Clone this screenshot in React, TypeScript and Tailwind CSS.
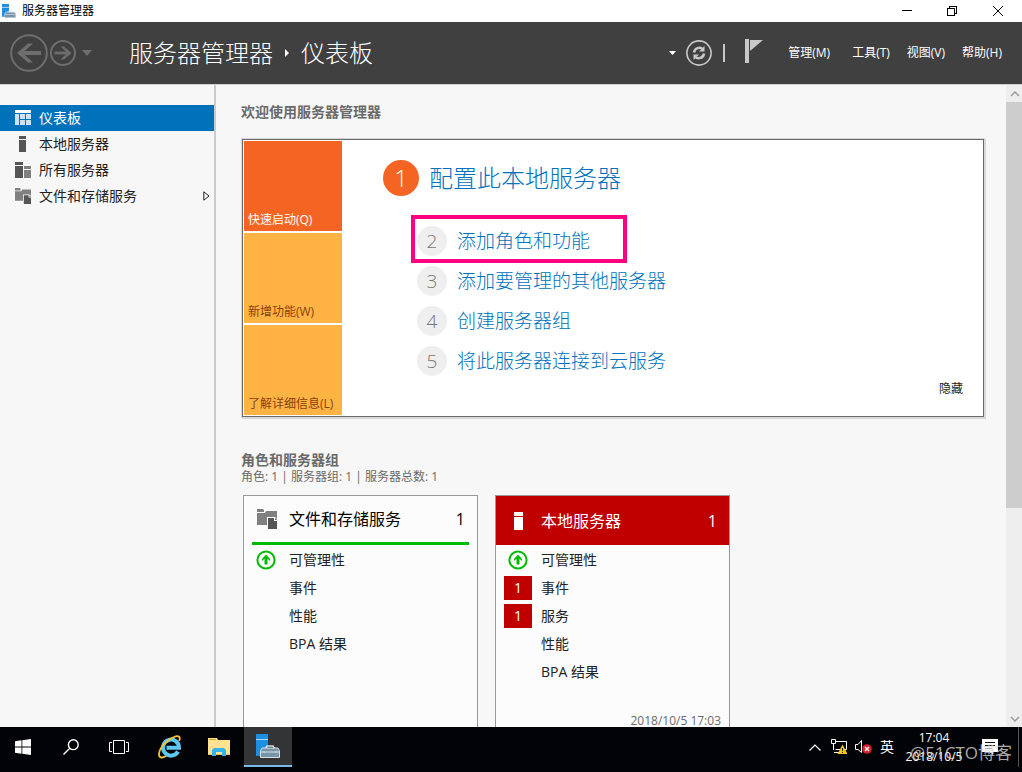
import React from 'react';

const NAV_ITEMS = [
  { label: '仪表板', icon: 'dashboard', active: true },
  { label: '本地服务器', icon: 'server' },
  { label: '所有服务器', icon: 'servers' },
  { label: '文件和存储服务', icon: 'storage', expandable: true },
];

const MENUS = ['工具(T)', '视图(V)', '帮助(H)'];

const STEPS = [
  { num: 2, label: '添加角色和功能', marked: true },
  { num: 3, label: '添加要管理的其他服务器' },
  { num: 4, label: '创建服务器组' },
  { num: 5, label: '将此服务器连接到云服务' },
];

type Row = { label: string; ok?: boolean; alerts?: number };

const STORAGE_ROWS: Row[] = [
  { label: '可管理性', ok: true },
  { label: '事件' },
  { label: '性能' },
  { label: 'BPA 结果' },
];

const LOCAL_ROWS: Row[] = [
  { label: '可管理性', ok: true },
  { label: '事件', alerts: 1 },
  { label: '服务', alerts: 1 },
  { label: '性能' },
  { label: 'BPA 结果' },
];

const StorageIcon: React.FC<{ className?: string }> = ({ className }) => (
  <svg className={className} viewBox="0 0 20 20" aria-hidden="true">
    <path d="M0 0h6l1 1v2H0zM0 4h8l1-2h11v14H0z" fill="#808080" />
    <path d="M10 8h8l3 3v10H10z" fill="#fcfcfc" />
    <path d="M11 9h6v3h3v8h-9z" fill="#555" />
    <path d="M18 9l2 2h-2z" fill="#555" />
  </svg>
);

const NavIcon: React.FC<{ name: string }> = ({ name }) => {
  if (name === 'storage') return <StorageIcon className="w-4 h-4 shrink-0" />;
  return (
    <svg className="w-4 h-4 shrink-0" viewBox="0 0 16 16" shapeRendering="crispEdges" aria-hidden="true">
      {name === 'dashboard' && (
        <>
          <path d="M0 0h16v3H0z" fill="#fff" />
          <path d="M0 4h4v11H0zM5 4h5v5H5zM11 4h5v5h-5zM5 10h5v5H5zM11 10h5v5h-5z" fill="#cce3f3" />
        </>
      )}
      {name === 'server' && <path d="M4 0h7v3H4zM4 4h7v12H4z" fill="#555" />}
      {name === 'servers' && (
        <>
          <path d="M0 0h8v3H0zM0 4h8v12H0z" fill="#555" />
          <path d="M9 4h7v3H9zM9 8h7v8H9z" fill="#808080" />
        </>
      )}
    </svg>
  );
};

const ServerLogo: React.FC<{ className?: string }> = ({ className }) => (
  <svg className={className} viewBox="0 0 24 24" aria-hidden="true">
    <path d="M0 0h12v5H0zM0 6h12v16H0z" fill="#1e8fe0" />
    <path d="M0 5h12v1H0z" fill="#a8d8ff" />
    <path d="M9.500 14.500l1.500-2.500h6l1.500 2.500" fill="none" stroke="#d5dfe6" strokeWidth="1.500" />
    <path d="M6 14h16l1.500 3v6.500h-19V17z" fill="#7895a8" stroke="#d5dfe6" strokeWidth="1" />
    <path d="M5 18h18M8 17v2M20 17v2" stroke="#d5dfe6" strokeWidth="1" />
  </svg>
);

const OkIcon: React.FC = () => (
  <svg className="w-5 h-5" viewBox="0 0 20 20" aria-hidden="true">
    <circle cx="10" cy="10" r="8.600" fill="#fff" stroke="#0b0" strokeWidth="2" />
    <path d="M10 4.600l4 4.400v2l-2.500-2.200v5.800h-3V8.800L6 11V9z" fill="#0b0" />
  </svg>
);

const RowList: React.FC<{ rows: Row[] }> = ({ rows }) => (
  <ul className="pt-px">
    {rows.map((row) => (
      <li key={row.label} className="flex items-center h-7 pl-2 text-sm text-[#222]">
        <span className="flex justify-center w-7 mr-[9px]">
          {row.ok && <OkIcon />}
          {row.alerts && <span className="w-7 h-6 leading-6 bg-[#c00000] text-white text-center">{row.alerts}</span>}
        </span>
        <a href="#detail">{row.label}</a>
      </li>
    ))}
  </ul>
);

const TitleBar: React.FC = () => (
  <div className="flex items-center h-[22px] bg-white text-xs text-black shrink-0">
    <ServerLogo className="w-[14px] h-[14px] ml-0.5 mr-[6px]" />
    <span>服务器管理器</span>
    <div className="flex items-center h-full ml-auto pr-px">
      <button aria-label="最小化" className="w-[45px] h-full flex items-center justify-center">
        <svg className="w-[10px] h-[10px]" viewBox="0 0 10 10" stroke="#000" shapeRendering="crispEdges">
          <path d="M0 4.500h10" />
        </svg>
      </button>
      <button aria-label="还原" className="w-[45px] h-full flex items-center justify-center">
        <svg className="w-[10px] h-[10px]" viewBox="0 0 10 10" stroke="#000" fill="none" shapeRendering="crispEdges">
          <path d="M.5 2.500h7v7h-7zM2.500 2.500v-2h7v7h-2" />
        </svg>
      </button>
      <button aria-label="关闭" className="w-[47px] h-full flex items-center justify-center">
        <svg className="w-[10px] h-[10px]" viewBox="0 0 10 10" stroke="#000">
          <path d="M0 0l10 10M10 0L0 10" />
        </svg>
      </button>
    </div>
  </div>
);

const Header: React.FC = () => (
  <header className="flex items-center h-[63px] shrink-0 bg-[#404040] border-b border-[#d0d0d0] text-white">
    <button aria-label="后退" className="ml-[10px]">
      <svg className="w-[38px] h-[38px]" viewBox="0 0 38 38" fill="none" stroke="#6e6e6e">
        <circle cx="19" cy="19" r="17.800" strokeWidth="2" />
        <path d="M31 19H9" strokeWidth="4" />
        <path d="M23 9.500h-5L7 19l11 9.500h5L12.500 19z" fill="#6e6e6e" stroke="none" />
      </svg>
    </button>
    <button aria-label="前进" className="ml-0.5">
      <svg className="w-[26px] h-[26px]" viewBox="0 0 26 26" fill="none" stroke="#6e6e6e">
        <circle cx="13" cy="13" r="12" strokeWidth="2" />
        <path d="M4.500 13h15" strokeWidth="2.800" />
        <path d="M10.500 6.500H14l7.500 6.500L14 19.500h-3.500L17.500 13z" fill="#6e6e6e" stroke="none" />
      </svg>
    </button>
    <button aria-label="历史记录" className="ml-[6px]">
      <svg className="w-[10px] h-[6px]" viewBox="0 0 10 6">
        <path d="M0 0h10L5 6z" fill="#6e6e6e" />
      </svg>
    </button>
    <h1 className="flex items-center ml-[37px] text-2xl font-light whitespace-nowrap">
      服务器管理器
      <svg className="w-1 h-[8px] mx-3" viewBox="0 0 4 8" aria-hidden="true">
        <path d="M0 0l4 4-4 4z" fill="#fff" />
      </svg>
      仪表板
    </h1>
    <div className="flex items-center ml-auto pr-5 text-xs whitespace-nowrap">
      <svg className="w-[7px] h-[4px] mr-[10px]" viewBox="0 0 7 4" aria-hidden="true">
        <path d="M0 0h7L3.500 4z" fill="#fff" />
      </svg>
      <button aria-label="刷新">
        <svg className="w-[26px] h-[26px]" viewBox="0 0 26 26" fill="none" stroke="#c8c8c8">
          <circle cx="13" cy="13" r="12.100" strokeWidth="1.600" />
          <path d="M8 12.500a5.300 5.300 0 0 1 9.200-3M18 13.500a5.300 5.300 0 0 1-9.200 3" strokeWidth="2.400" />
          <path d="M18.500 6v5.500H13l2-2zM7.500 20v-5.500H13l-2 2z" fill="#c8c8c8" stroke="none" />
        </svg>
      </button>
      <span className="w-0.5 h-[18px] ml-[11px] bg-[#c8c8c8]" />
      <button aria-label="通知" className="ml-5">
        <svg className="w-[18px] h-6 -translate-y-0.5" viewBox="0 0 18 24" fill="#c8c8c8">
          <path d="M0 0h4v24H0z" />
          <path d="M5 1h13L5 12z" />
        </svg>
      </button>
      <button className="ml-[25px] mr-[5px]">管理(M)</button>
      {MENUS.map((m) => (
        <button key={m} className="ml-[17px]">
          {m}
        </button>
      ))}
    </div>
  </header>
);

const Sidebar: React.FC = () => (
  <nav className="w-[216px] shrink-0 pt-5 border-r-2 border-[#ccc]">
    {NAV_ITEMS.map((item) => (
      <a
        key={item.label}
        href="#nav"
        className={`flex items-center h-[26px] pl-[15px] pr-1 text-sm ${item.active ? 'bg-[#0072bc] text-white' : 'text-[#222]'}`}
      >
        <NavIcon name={item.icon} />
        <span className="ml-2">{item.label}</span>
        {item.expandable && (
          <svg className="w-[7px] h-[10px] ml-auto" viewBox="0 0 7 10" fill="none" stroke="#222" aria-hidden="true">
            <path d="M.800.800v8.400L6 5z" />
          </svg>
        )}
      </a>
    ))}
  </nav>
);

const Welcome: React.FC = () => (
  <section className="flex mt-[17px] ml-px p-px bg-white border border-[#6a6a6a] shadow-[0_0_0_1px_#d8d8d8,1px_1px_0_1px_#d8d8d8]">
    <div className="flex flex-col gap-0.5 w-[98px] shrink-0 text-xs">
      <button className="flex items-end h-[90px] pl-1 pb-[3px] bg-[#f46523] text-white">快速启动(Q)</button>
      <button className="flex items-end h-[90px] pl-1 pb-[3px] bg-[#ffb343] text-[#8a3e10]">新增功能(W)</button>
      <button className="flex items-end h-[90px] pl-1 pb-[3px] bg-[#ffb343] text-[#8a3e10]">了解详细信息(L)</button>
    </div>
    <div className="flex flex-col flex-1 pl-[41px] pt-[19px] font-light text-[#0072bc]">
      <a href="#configure" className="flex items-center gap-[10px] h-9 text-2xl">
        <span className="w-9 h-9 leading-9 rounded-full bg-[#f46523] text-white text-center">1</span>
        配置此本地服务器
      </a>
      <ol className="flex flex-col gap-[10px] pl-[34px] pt-[30px] text-[19px]">
        {STEPS.map((s) => (
          <li key={s.num} className="relative flex h-[30px]">
            <a href="#step" className="flex items-center gap-[10px]">
              <span className="w-[30px] h-[30px] leading-[30px] rounded-full bg-[#efefef] text-[#777] text-center">{s.num}</span>
              {s.label}
            </a>
            {s.marked && <span className="absolute -left-[6px] -top-[11px] w-[216px] h-12 border-4 border-[#ff0080]" />}
          </li>
        ))}
      </ol>
      <button className="self-end mt-[5px] mr-[19px] text-xs font-normal text-[#222]">隐藏</button>
    </div>
  </section>
);

const Groups: React.FC = () => (
  <section className="mt-[34px] text-[#6a6a6a]">
    <h2 className="text-sm leading-[18px] font-bold">角色和服务器组</h2>
    <p className="text-xs leading-4">角色: 1 | 服务器组: 1 | 服务器总数: 1</p>
    <div className="flex gap-[17px] ml-0.5 mt-[10px]">
      <article className="w-[235px] h-[260px] bg-[#fcfcfc] border border-[#999]">
        <div className="flex items-center h-[49px] mx-2 pl-[5px] pr-1 border-b-3 border-[#00b900] text-base text-black">
          <StorageIcon className="w-5 h-5 mr-3" />
          <a href="#storage">文件和存储服务</a>
          <span className="ml-auto">1</span>
        </div>
        <RowList rows={STORAGE_ROWS} />
      </article>
      <article className="flex flex-col w-[235px] h-[260px] bg-[#fcfcfc] border border-[#999]">
        <div className="flex items-center h-[49px] shrink-0 pl-[18px] pr-3 bg-[#c00000] text-base text-white">
          <svg className="w-[9px] h-[18px] mr-[18px]" viewBox="0 0 9 18" fill="#fff" shapeRendering="crispEdges" aria-hidden="true">
            <path d="M0 0h9v4H0zM0 5h9v13H0z" />
          </svg>
          <a href="#local">本地服务器</a>
          <span className="ml-auto">1</span>
        </div>
        <RowList rows={LOCAL_ROWS} />
        <time className="self-end mt-[27px] mr-2 text-xs leading-4">2018/10/5 17:03</time>
      </article>
    </div>
  </section>
);

const ScrollBar: React.FC = () => (
  <div className="flex flex-col w-4 shrink-0 bg-[#eee]" aria-hidden="true">
    <svg className="w-4 h-[17px] shrink-0" viewBox="0 0 16 17" fill="none" stroke="#999" strokeWidth="1.500">
      <path d="M5 11l4-4 4 4" />
    </svg>
    <div className="h-[406px] bg-[#cdcdcd]" />
    <svg className="w-4 h-[17px] mt-auto shrink-0" viewBox="0 0 16 17" fill="none" stroke="#999" strokeWidth="1.500">
      <path d="M5 7l4 4 4-4" />
    </svg>
  </div>
);

const TaskBar: React.FC = () => (
  <footer className="relative flex h-[45px] shrink-0 pb-[5px] bg-[#020306] text-white">
    <button aria-label="开始" className="flex items-center justify-center w-[46px]">
      <svg className="w-4 h-4" viewBox="0 0 16 16" fill="#fff">
        <path d="M0 2.200l6.500-.9v6.200H0zM7.300 1.200L16 0v7.500H7.300zM0 8.400h6.500v6.300L0 13.800zM7.300 8.400H16V16l-8.700-1.200z" />
      </svg>
    </button>
    <button aria-label="搜索" className="flex items-center justify-center w-[50px]">
      <svg className="w-4 h-4" viewBox="0 0 16 16" fill="none" stroke="#fff" strokeWidth="1.400">
        <circle cx="10.300" cy="5.700" r="4.900" />
        <path d="M6.800 9.200L.5 15.500" />
      </svg>
    </button>
    <button aria-label="任务视图" className="flex items-center justify-center w-[46px]">
      <svg className="w-5 h-[14px]" viewBox="0 0 20 14" fill="none" stroke="#fff">
        <path d="M4.500.500h11v13h-11zM3 2.500H.500v9H3M17 2.500h2.500v9H17" />
      </svg>
    </button>
    <button aria-label="Internet Explorer" className="flex items-center justify-center w-[56px]">
      <svg className="w-6 h-6" viewBox="0 0 24 24" fill="none">
        <path d="M20 16.500A8 8 0 1 1 21 12.800H8.500" stroke="#5cc8f5" strokeWidth="4" />
        <path d="M21 6c2-4 0-6-5-4C9 4.500 1 13 1 19.500c0 4 4 3.500 7 1.500" stroke="#f6c431" strokeWidth="1.800" />
      </svg>
    </button>
    <button aria-label="文件资源管理器" className="flex items-center justify-center w-[42px]">
      <svg className="w-[22px] h-[18px]" viewBox="0 0 22 18">
        <path d="M0 0h9l1 2h12v15H0z" fill="#ffe292" />
        <path d="M1 1h7v1H1z" fill="#e0a323" />
        <path d="M0 16h22v1H0z" fill="#f0c45c" />
        <path d="M4 18v-6l2-2h10l2 2v6h-4v-4H8v4z" fill="#33b4ea" />
      </svg>
    </button>
    <button aria-label="服务器管理器" className="flex items-center justify-center w-12 ml-1 bg-[#333436] border-b-2 border-[#76b9ed]">
      <ServerLogo className="w-6 h-6" />
    </button>

    <div className="flex items-center ml-auto pr-6">
      <svg className="w-3 h-[7px]" viewBox="0 0 12 7" fill="none" stroke="#fff" strokeWidth="1.200" aria-hidden="true">
        <path d="M.5 6.500L6 1l5.500 5.500" />
      </svg>
      <svg className="w-4 h-4 ml-[10px]" viewBox="0 0 16 16" fill="none" stroke="#fff" aria-hidden="true">
        <path d="M4 2.500h11.500v8H4.500M2.500 5v6M.500.500h4v4h-4zM3 13.500h5" />
        <path d="M11.500 5.500l5 9.500h-10z" fill="#fcc419" stroke="none" />
        <path d="M11.500 9v3M11.500 13v1" stroke="#222" />
      </svg>
      <svg className="w-[17px] h-[14px] ml-2" viewBox="0 0 17 14" fill="none" stroke="#fff" aria-hidden="true">
        <path d="M.5 4.500H3l3.500-4v12L3 9.500H.5z" />
        <circle cx="12" cy="9" r="4.800" fill="#d4202c" stroke="none" />
        <path d="M10 7l4 4M14 7l-4 4" strokeWidth="1.300" />
      </svg>
      <span className="ml-2 text-sm">英</span>
      <div className="flex flex-col items-center w-20 text-xs leading-[19px]">
        <span>17:04</span>
        <span>2018/10/5</span>
      </div>
      <svg className="w-4 h-4 ml-2" viewBox="0 0 16 16" aria-hidden="true">
        <path d="M0 0h16v13h-5v3l-3-3H0z" fill="#fff" />
        <path d="M3 3.500h10M3 6.500h10M3 9.500h7" stroke="#111" />
      </svg>
    </div>
    <span className="absolute right-[3px] top-0 w-px h-10 bg-[#555]" />
    <span className="absolute right-[10px] top-[14px] text-[17px] leading-6 text-[#d8d8d8]/80">@51CTO博客</span>
  </footer>
);

const App: React.FC = () => (
  <div className="flex flex-col h-screen overflow-hidden bg-[#f7f7f7] font-['Open_Sans','Noto_Sans_CJK_SC',sans-serif]">
    <TitleBar />
    <Header />
    <div className="flex flex-1 min-h-0">
      <Sidebar />
      <main className="flex-1 overflow-hidden pl-[25px] pr-[22px] pt-[17px]">
        <h2 className="text-sm font-bold text-[#6a6a6a]">欢迎使用服务器管理器</h2>
        <Welcome />
        <Groups />
      </main>
      <ScrollBar />
    </div>
    <TaskBar />
  </div>
);

export default App;
